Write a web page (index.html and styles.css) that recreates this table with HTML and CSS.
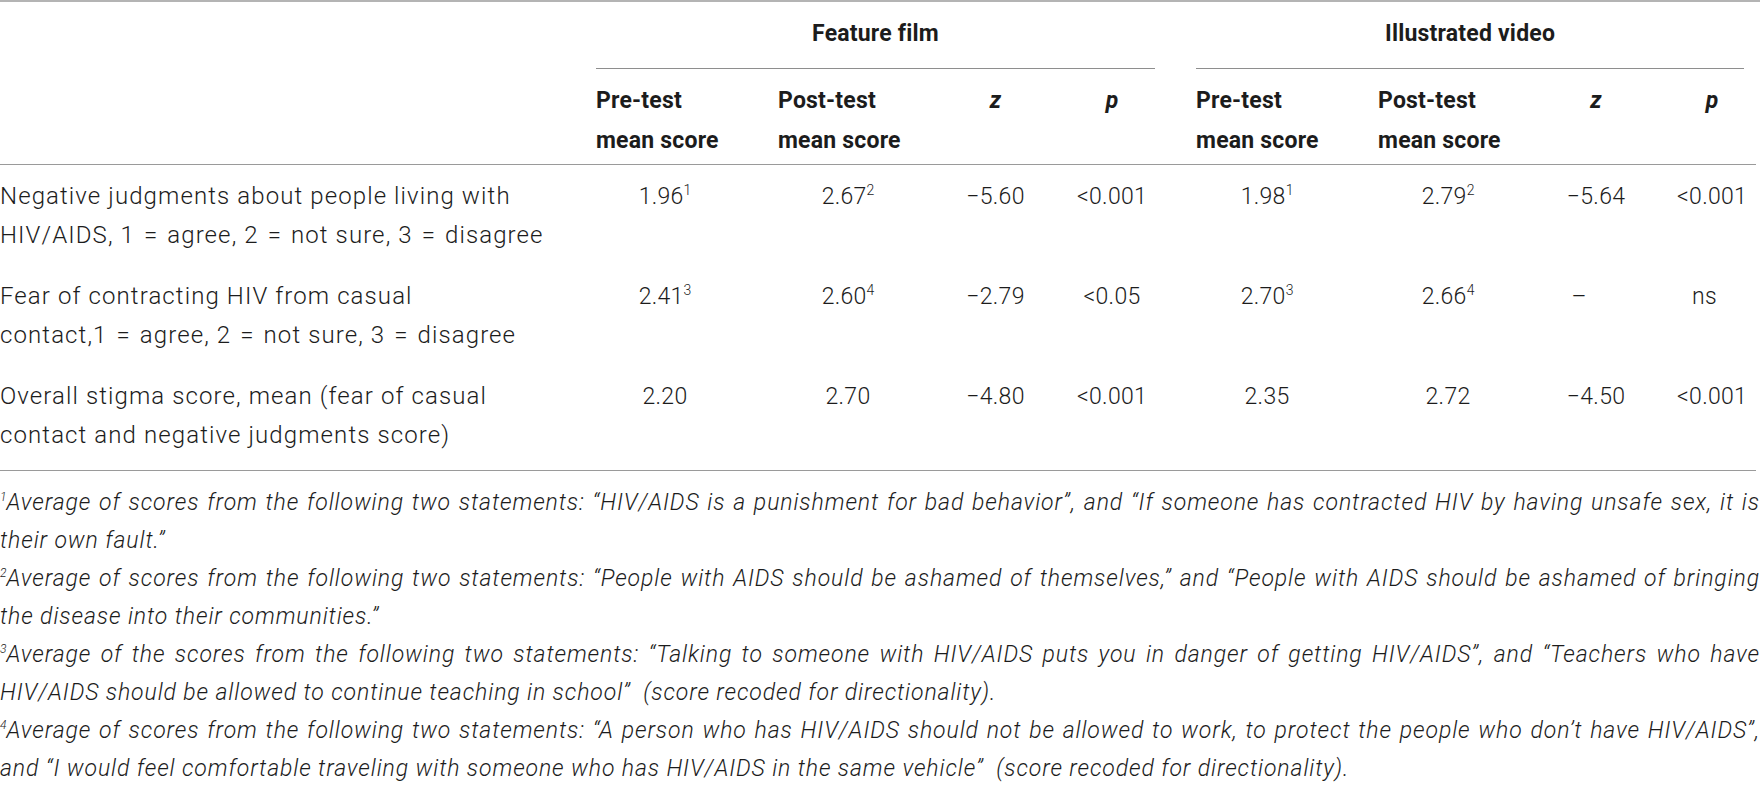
FILE: index.html
```html
<!DOCTYPE html>
<html lang="en">
<head>
    <meta charset="UTF-8">
    <meta name="viewport" content="width=device-width, initial-scale=1.0">
    <title>Stigma scores before and after the films</title>
    <link rel="stylesheet" href="styles.css">
</head>
<body>
    <div class="page">
        <table class="scores">
            <colgroup>
                <col class="w-label">
                <col class="w-pre"><col class="w-post"><col class="w-z"><col class="w-p">
                <col class="w-ipre"><col class="w-ipost"><col class="w-iz"><col class="w-ip">
            </colgroup>
            <thead>
                <tr class="groups">
                    <th></th>
                    <th colspan="4"><span class="group group-film">Feature film</span></th>
                    <th colspan="4"><span class="group group-video">Illustrated video</span></th>
                </tr>
                <tr class="cols">
                    <th></th>
                    <th class="c-pre">Pre-test<br>mean score</th>
                    <th class="c-post">Post-test<br>mean score</th>
                    <th class="c-z"><i>z</i></th>
                    <th class="c-p"><i>p</i></th>
                    <th class="c-ipre">Pre-test<br>mean score</th>
                    <th class="c-ipost">Post-test<br>mean score</th>
                    <th class="c-iz"><i>z</i></th>
                    <th class="c-ip"><i>p</i></th>
                </tr>
            </thead>
            <tbody>
                <tr>
                    <td class="label">Negative judgments about people living with<br>HIV/AIDS, 1 <span class="eq">=</span> agree, 2 <span class="eq">=</span> not sure, 3 <span class="eq">=</span> disagree</td>
                    <td class="c-pre">1.96<sup>1</sup></td>
                    <td class="c-post">2.67<sup>2</sup></td>
                    <td class="c-z">&minus;5.60</td>
                    <td class="c-p">&lt;0.001</td>
                    <td class="c-ipre">1.98<sup>1</sup></td>
                    <td class="c-ipost">2.79<sup>2</sup></td>
                    <td class="c-iz">&minus;5.64</td>
                    <td class="c-ip">&lt;0.001</td>
                </tr>
                <tr>
                    <td class="label">Fear of contracting HIV from casual<br>contact,1 <span class="eq">=</span> agree, 2 <span class="eq">=</span> not sure, 3 <span class="eq">=</span> disagree</td>
                    <td class="c-pre">2.41<sup>3</sup></td>
                    <td class="c-post">2.60<sup>4</sup></td>
                    <td class="c-z">&minus;2.79</td>
                    <td class="c-p">&lt;0.05</td>
                    <td class="c-ipre">2.70<sup>3</sup></td>
                    <td class="c-ipost">2.66<sup>4</sup></td>
                    <td class="c-iz dash">&ndash;</td>
                    <td class="c-ip ns">ns</td>
                </tr>
                <tr>
                    <td class="label">Overall stigma score, mean (fear of casual<br>contact and negative judgments score)</td>
                    <td class="c-pre">2.20</td>
                    <td class="c-post">2.70</td>
                    <td class="c-z">&minus;4.80</td>
                    <td class="c-p">&lt;0.001</td>
                    <td class="c-ipre">2.35</td>
                    <td class="c-ipost">2.72</td>
                    <td class="c-iz">&minus;4.50</td>
                    <td class="c-ip">&lt;0.001</td>
                </tr>
            </tbody>
        </table>

        <div class="notes">
            <p><span class="line"><sup>1</sup>Average of scores from the following two statements: &ldquo;HIV/AIDS is a punishment for bad behavior&rdquo;, and &ldquo;If someone has contracted HIV by having unsafe sex, it is</span>their own fault.&rdquo;</p>
            <p><span class="line"><sup>2</sup>Average of scores from the following two statements: &ldquo;People with AIDS should be ashamed of themselves,&rdquo; and &ldquo;People with AIDS should be ashamed of bringing</span>the disease into their communities.&rdquo;</p>
            <p><span class="line"><sup>3</sup>Average of the scores from the following two statements: &ldquo;Talking to someone with HIV/AIDS puts you in danger of getting HIV/AIDS&rdquo;, and &ldquo;Teachers who have</span>HIV/AIDS should be allowed to continue teaching in school&rdquo;&ensp;(score recoded for directionality).</p>
            <p><span class="line"><sup>4</sup>Average of scores from the following two statements: &ldquo;A person who has HIV/AIDS should not be allowed to work, to protect the people who don&rsquo;t have HIV/AIDS&rdquo;,</span>and &ldquo;I would feel comfortable traveling with someone who has HIV/AIDS in the same vehicle&rdquo;&ensp;(score recoded for directionality).</p>
        </div>
    </div>
</body>
</html>
```

FILE: styles.css
```css
html {
    overflow: hidden;
}
body {
    font-family: 'Roboto', 'Liberation Sans', sans-serif;
    background-color: #fff;
    color: #1c1c1c;
    margin: 0;
}
.page {
    width: 1760px;
    border-top: 2px solid #b4b4b4;
}
.scores {
    width: 1756px;
    border-collapse: collapse;
    table-layout: fixed;
}

/* column widths */
.w-label { width: 590px; }
.w-pre { width: 160px; }
.w-post { width: 190px; }
.w-z { width: 105px; }
.w-p { width: 115px; }
.w-ipre { width: 185px; }
.w-ipost { width: 185px; }
.w-iz { width: 115px; }
.w-ip { width: 111px; }

th, td {
    padding: 0;
    vertical-align: top;
}
th {
    font-size: 23px;
    font-weight: 700;
    line-height: 40px;
    letter-spacing: 0.2px;
    text-align: left;
}
.groups th {
    padding-top: 12px;
    text-align: center;
}
.group {
    display: block;
    padding-bottom: 14px;
    border-bottom: 1px solid #8e8e8e;
}
.group-film {
    margin: 0 5px 0 6px;
}
.group-video {
    margin: 0 12px 0 36px;
}
.cols th {
    padding-top: 12px;
    padding-bottom: 3px;
    border-bottom: 1px solid #9a9a9a;
}
th.c-pre { padding-left: 6px; }
th.c-post { padding-left: 28px; }
th.c-ipre { padding-left: 36px; }
th.c-ipost { padding-left: 33px; }
th.c-z, th.c-p, th.c-iz, th.c-ip {
    text-align: center;
}

td {
    font-size: 23px;
    font-weight: 300;
    line-height: 39px;
    letter-spacing: 0.3px;
    text-align: center;
    padding-top: 12px;
    padding-bottom: 10px;
}
tbody tr:last-child td {
    padding-bottom: 15px;
    border-bottom: 1px solid #9a9a9a;
}
td.label {
    font-size: 24px;
    letter-spacing: 1.1px;
    text-align: left;
}
.eq {
    margin: 0 2px;
}

/* value centres under each header */
td.c-pre { padding-right: 10px; }
td.c-post { padding-left: 6px; }
.c-z { padding-left: 6px; }
.c-p { padding-left: 19px; }
td.c-ipre { padding-left: 29px; }
td.c-ipost { padding-left: 21px; }
.c-iz { padding-left: 17px; }
.c-ip { padding-left: 23px; }
td.dash {
    padding-left: 0;
    padding-right: 17px;
}
td.ns {
    padding-left: 8px;
}
td sup {
    font-size: 14px;
    line-height: 0;
    vertical-align: 9px;
    letter-spacing: 0;
}

.notes {
    padding-top: 13px;
    font-size: 23px;
    font-style: italic;
    font-weight: 300;
    line-height: 38px;
    letter-spacing: 0.9px;
}
.notes p {
    margin: 0;
}
.notes .line {
    display: block;
    white-space: nowrap;
    text-align: justify;
    text-align-last: justify;
}
.notes sup {
    font-size: 12px;
    line-height: 0;
    vertical-align: 9px;
    letter-spacing: 0;
}
```
